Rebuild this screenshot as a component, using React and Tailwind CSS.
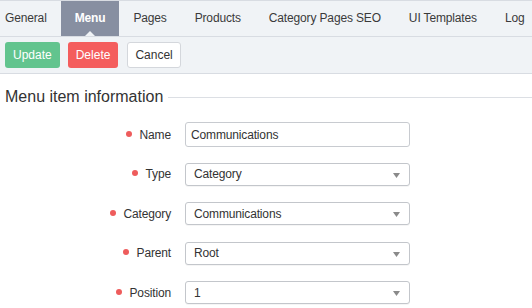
import React from "react";

const tabs = ["General", "Menu", "Pages", "Products", "Category Pages SEO", "UI Templates", "Log"];

function Row({ label, children }) {
  return (
    <div className="flex h-[39.5px] items-center">
      <div className="flex w-[171px] items-center justify-end text-[12px] tracking-[-0.15px] text-[#333]">
        <span className="mr-[8px] mt-[-2px] h-[6px] w-[6px] rounded-full bg-[#ee5c5c]" />
        <span>{label}</span>
      </div>
      <div className="ml-[14px]">{children}</div>
    </div>
  );
}

function Select({ value }) {
  return (
    <div className="flex h-[23px] w-[225px] items-center justify-between rounded-[3px] border border-[#c3c6cb] bg-white pl-[8px] pr-[9px] text-[12px] tracking-[-0.15px] text-[#333] shadow-[0_1px_0_rgba(0,0,0,0.04)]">
      <span>{value}</span>
      <svg width="7" height="5" viewBox="0 0 7 5" className="mt-[2px]">
        <polygon points="0,0 7,0 3.5,5" fill="#8a8a8a" />
      </svg>
    </div>
  );
}

export default function App() {
  return (
    <div className="h-[308px] w-[532px] overflow-hidden bg-white" style={{ fontFamily: '"Liberation Sans", Arial, sans-serif' }}>
      <div className="flex h-[37px] border-t border-b border-[#d8dce2] bg-[#f0f3f6]">
        <div className="-ml-[9px] flex">
          {tabs.map((t) => (
            <div
              key={t}
              className={
                t === "Menu"
                  ? "relative whitespace-nowrap bg-[#878fa1] px-[14px] text-[12px] font-bold leading-[35px] tracking-[-0.15px] text-white"
                  : "whitespace-nowrap px-[14px] text-[12px] leading-[35px] tracking-[-0.15px] text-[#3a3a3a]"
              }
            >
              {t}
              {t === "Menu" && (
                <span className="absolute bottom-0 left-1/2 h-0 w-0 -translate-x-1/2 border-x-[5px] border-b-[5px] border-x-transparent border-b-[#f0f3f6]" />
              )}
            </div>
          ))}
        </div>
      </div>
      <div className="flex h-[37px] items-center border-b border-[#d8dce2] bg-[#f0f3f6] pl-[5px]">
        <button className="h-[26px] rounded-[3px] bg-[#62c48e] px-[8px] text-[12px] text-white">Update</button>
        <button className="ml-[8px] h-[26px] rounded-[3px] bg-[#f45d5d] px-[8px] text-[12px] text-white">Delete</button>
        <button className="ml-[9px] h-[26px] rounded-[3px] border border-[#d4d7dc] bg-white px-[7px] text-[12px] text-[#333]">Cancel</button>
      </div>
      <div className="mt-[12px] flex h-[22px] items-center pl-[5px]">
        <span className="text-[16px] leading-[22px] text-[#333]">Menu item information</span>
        <div className="ml-[5px] h-px flex-1 bg-[#dcdfe4]" />
      </div>
      <div className="mt-[7px]">
        <Row label="Name">
          <div className="flex h-[25px] w-[225px] items-center rounded-[3px] border border-[#c8cbd0] bg-white pl-[5px] text-[12px] tracking-[-0.15px] text-[#333]">
            Communications
          </div>
        </Row>
        <Row label="Type">
          <Select value="Category" />
        </Row>
        <Row label="Category">
          <Select value="Communications" />
        </Row>
        <Row label="Parent">
          <Select value="Root" />
        </Row>
        <Row label="Position">
          <Select value="1" />
        </Row>
      </div>
    </div>
  );
}
